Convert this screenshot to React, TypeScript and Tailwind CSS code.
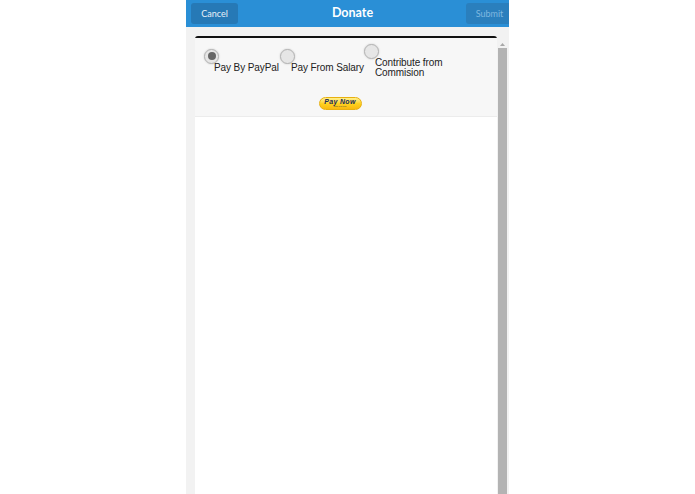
export default function App() {
  const Radio = ({ checked }: { checked?: boolean }) => (
    <span className="flex h-[15px] w-[15px] shrink-0 items-center justify-center rounded-full border border-[#b4b4b4] bg-[#e6e6e6] shadow-[0_0_2px_rgba(0,0,0,0.2)]">
      {checked && <span className="h-[8px] w-[8px] rounded-full bg-[#666666]" />}
    </span>
  );
  return (
    <div className="flex h-[494px] w-[695px] justify-center overflow-hidden bg-white font-['Liberation_Sans',sans-serif]">
      <div className="flex h-full w-[323px] flex-col bg-[#f2f2f2]">
        <header className="flex h-[27px] shrink-0 items-center justify-between bg-[#2a8fd6] pl-[5px] text-white">
          <div className="flex h-[21px] w-[47px] items-center justify-center rounded-[3px] bg-[#2679b6] text-[9px] font-[Lato,sans-serif] text-[#e8f1f8]">Cancel</div>
          <div className="ml-[1px] text-[12.5px] font-bold font-[Lato,sans-serif]">Donate</div>
          <div className="flex h-[21px] w-[43px] items-center justify-center rounded-l-[3px] bg-[#2a7fbd] pl-[4px] text-[9px] font-[Lato,sans-serif] text-[#7fb8e0]">Submit</div>
        </header>
        <div className="flex min-h-0 flex-1 pl-[9px] pt-[9px]">
          <main className="flex w-[302px] flex-col rounded-t-[3px] border-t-2 border-[#111111] bg-white">
            <section className="h-[79px] border-b border-[#ececec] bg-[#f7f7f7] pl-[9px] pt-[5px]">
              <div className="flex h-[36px] items-center">
                <div className="flex w-[76px] flex-col">
                  <Radio checked />
                  <span className="ml-[10px] mt-[-2px] whitespace-nowrap text-[10px] leading-[12px] tracking-[-0.1px] text-[#222222]">Pay By PayPal</span>
                </div>
                <div className="flex w-[84px] flex-col">
                  <Radio />
                  <span className="ml-[11px] mt-[-2px] whitespace-nowrap text-[10px] leading-[12px] tracking-[-0.1px] text-[#222222]">Pay From Salary</span>
                </div>
                <div className="flex flex-col">
                  <Radio />
                  <span className="ml-[11px] mt-[-1px] w-[90px] text-[10px] leading-[10.5px] tracking-[-0.1px] text-[#222222]">Contribute from Commision</span>
                </div>
              </div>
              <div className="mt-[18px] flex justify-center">
                <div className="ml-[-21px] flex h-[13px] w-[43px] flex-col items-center justify-center rounded-full border border-[#e8b010] bg-gradient-to-b from-[#fff08a] via-[#ffd21f] to-[#f9b90f]">
                  <span className="text-[7px] font-bold italic leading-[6px] tracking-[0.3px] text-[#1a2a55]">Pay Now</span>
                  <span className="text-[2.5px] leading-[3px] text-[#555533]">with PayPal</span>
                </div>
              </div>
            </section>
          </main>
          <aside className="ml-[1px] flex w-[9px] flex-col items-center">
            <svg width="7" height="5" viewBox="0 0 7 5" className="mb-[1px] mt-[6px] shrink-0"><path d="M3.5 1 L6 4 H1 Z" fill="#a8a8a8" /></svg>
            <div className="w-[9px] flex-1 bg-[#b3b3b3]" />
          </aside>
        </div>
      </div>
    </div>
  );
}
